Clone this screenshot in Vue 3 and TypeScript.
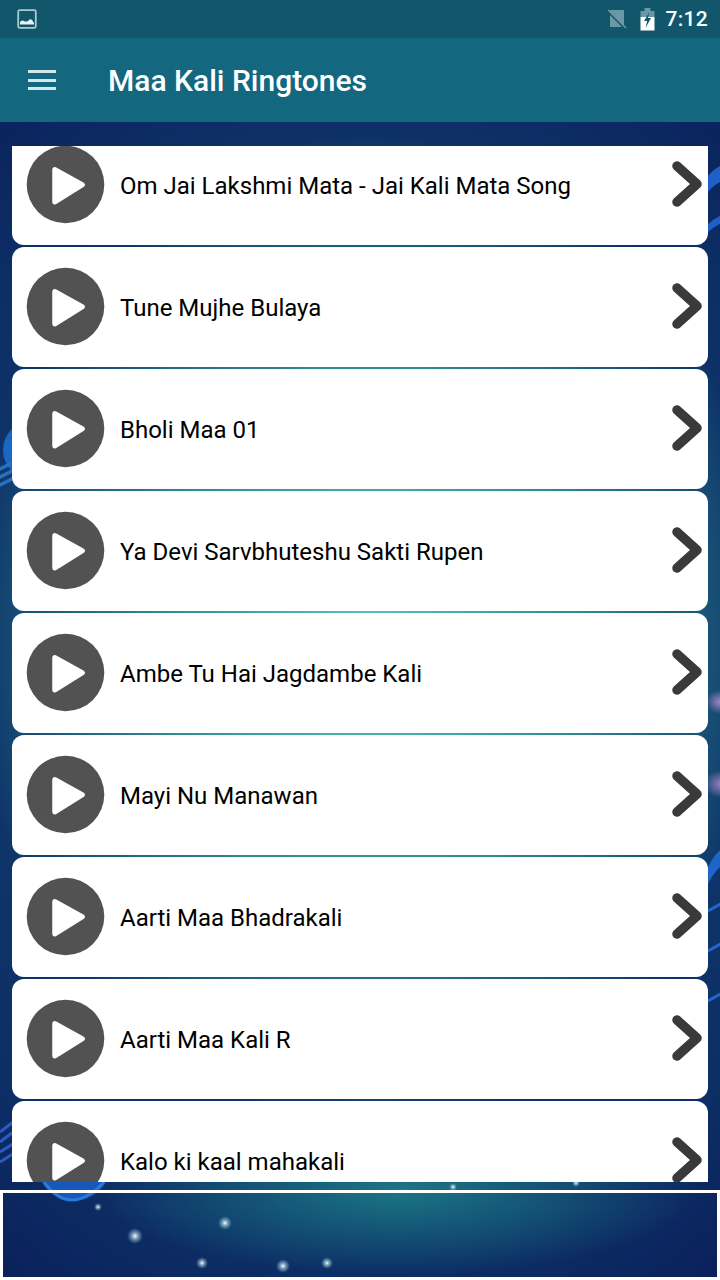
<script setup lang="ts">
const songs: string[] = [
  'Om Jai Lakshmi Mata - Jai Kali Mata Song',
  'Tune Mujhe Bulaya',
  'Bholi Maa 01',
  'Ya Devi Sarvbhuteshu Sakti Rupen',
  'Ambe Tu Hai Jagdambe Kali',
  'Mayi Nu Manawan',
  'Aarti Maa Bhadrakali',
  'Aarti Maa Kali R',
  'Kalo ki kaal mahakali',
]
const stars: { x: number; y: number; r: number }[] = [
  { x: 135, y: 1114, r: 8 },
  { x: 225, y: 1101, r: 7 },
  { x: 202, y: 1141, r: 6 },
  { x: 283, y: 1144, r: 7 },
  { x: 327, y: 1141, r: 6 },
  { x: 98, y: 1085, r: 4 },
  { x: 453, y: 1065, r: 4 },
  { x: 576, y: 1061, r: 4 },
]
</script>

<template>
  <div class="screen">
    <header class="status">
      <svg class="notif" viewBox="0 0 20 20" width="20" height="20">
        <rect x="1.2" y="1.2" width="17.6" height="17.6" rx="1.5" fill="none" stroke="#a9ccd3" stroke-width="1.8" />
        <path d="M3 15.5 L3 13 Q5 10.5 7 12 Q9 13 11 12 Q13 9 15 11 L17 14 L17 15.5 Z" fill="#e8f2f4" />
      </svg>
      <div class="status-right">
        <svg class="sim" viewBox="0 0 20 20" width="20" height="20">
          <path d="M3 1 H17 V18 H3 Z" fill="#6a98a4" />
          <path d="M1 1 L19 19" stroke="#6a98a4" stroke-width="1.6" />
          <path d="M1 3 L17 19" stroke="#11566a" stroke-width="1.4" />
        </svg>
        <svg class="batt" viewBox="0 0 15 23" width="15" height="23">
          <rect x="4.5" y="0" width="6" height="3" fill="#6a98a4" />
          <rect x="0.5" y="3" width="14" height="6" fill="#6a98a4" />
          <rect x="0.5" y="9" width="14" height="13.5" fill="#ffffff" />
          <path d="M9.5 4 L4 13 H7.2 L5.5 20 L11 10 H7.8 Z" fill="#11566a" />
        </svg>
        <span class="time">7:12</span>
      </div>
    </header>

    <div class="toolbar">
      <div class="burger"><i></i><i></i><i></i></div>
      <h1 class="title">Maa Kali Ringtones</h1>
    </div>

    <main class="stage">
      <svg class="decor" viewBox="0 0 720 1158" width="720" height="1158">
        <defs>
          <radialGradient id="glow">
            <stop offset="0" stop-color="#ffffff" />
            <stop offset="0.3" stop-color="#cfe6ee" stop-opacity="0.7" />
            <stop offset="1" stop-color="#8fc6d8" stop-opacity="0" />
          </radialGradient>
          <radialGradient id="purple">
            <stop offset="0" stop-color="#b58ccf" stop-opacity="0.9" />
            <stop offset="1" stop-color="#b58ccf" stop-opacity="0" />
          </radialGradient>
        </defs>
        <circle cx="32" cy="328" r="29" fill="#1a67c4" />
        <g fill="none" stroke="#2a6fc4" stroke-width="3.5">
          <path d="M-6 350 L14 340" />
          <path d="M-6 358 L14 348" />
          <path d="M-6 366 L14 356" />
        </g>
        <g fill="none" stroke="#2a5cc0" stroke-width="3">
          <path d="M0 1040 L16 1030" />
          <path d="M0 1030 L16 1020" />
          <path d="M0 1020 L16 1008" />
          <path d="M0 1010 L16 998" />
        </g>
        <path d="M42 1060 A36 34 0 0 0 106 1060 Z" fill="#1659bb" />
        <path d="M44 1060 Q70 1096 104 1060" fill="none" stroke="#2a78d8" stroke-width="3" />
        <path d="M706 56 Q714 46 724 42 V58 Q714 62 706 72 Z" fill="#1f5fc8" />
        <path d="M706 104 Q714 96 724 92 V100 Q714 104 706 112 Z" fill="#1f5fc8" />
        <path d="M706 750 Q714 730 724 726 V742 Q714 748 706 766 Z" fill="#1c66c8" />
        <g fill="none" stroke="#2466cc" stroke-width="3">
          <path d="M706 790 L724 780" />
          <path d="M706 830 L724 820" />
          <path d="M706 880 L724 870" />
        </g>
        <ellipse cx="720" cy="580" rx="14" ry="12" fill="url(#purple)" />
        <ellipse cx="722" cy="662" rx="18" ry="14" fill="url(#purple)" />
        <circle v-for="(s, i) in stars" :key="i" :cx="s.x" :cy="s.y" :r="s.r" fill="url(#glow)" />
      </svg>

      <section class="list">
        <article v-for="song in songs" :key="song" class="card">
          <svg class="play" viewBox="0 0 78 78" width="78" height="78">
            <circle cx="38.5" cy="38.5" r="38.8" fill="#525252" />
            <path d="M28.5 22 L56.5 37.5 Q58 38.5 56.5 40 L28.5 57.5 Q26 58.5 26 55.5 V24 Q26 21 28.5 22 Z" fill="#ffffff" stroke="#ffffff" stroke-width="1.5" stroke-linejoin="round" />
          </svg>
          <span class="name">{{ song }}</span>
          <svg class="chev" viewBox="0 0 36 50" width="36" height="50">
            <path d="M8 6 L28 24 L8 42" fill="none" stroke="#3a3a3a" stroke-width="9.5" stroke-linecap="round" stroke-linejoin="round" />
          </svg>
        </article>
      </section>

      <aside class="ad"></aside>
    </main>
  </div>
</template>

<style>
html,
body {
  margin: 0;
  background: #ffffff;
}
</style>

<style scoped>
.screen {
  width: 720px;
  height: 1280px;
  display: flex;
  flex-direction: column;
  overflow: hidden;
  font-family: Roboto, "Liberation Sans", sans-serif;
}
.status {
  height: 38px;
  flex: none;
  box-sizing: border-box;
  padding: 0 12px 0 17px;
  background: #11566a;
  display: flex;
  align-items: center;
  justify-content: space-between;
}
.notif {
  display: block;
}
.status-right {
  display: flex;
  align-items: center;
  gap: 10px;
}
.sim {
  margin-right: 3px;
}
.time {
  color: #ffffff;
  font-size: 21px;
  font-weight: 500;
  letter-spacing: 0.3px;
}
.toolbar {
  height: 84px;
  flex: none;
  background: #13677f;
  display: flex;
  align-items: center;
  box-sizing: border-box;
  padding: 0 0 0 28px;
}
.burger {
  width: 28px;
  height: 20px;
  display: flex;
  flex-direction: column;
  justify-content: space-between;
  margin-right: 52px;
}
.burger i {
  display: block;
  height: 3px;
  background: #d4e8ec;
}
.title {
  margin: 0;
  color: #ffffff;
  font-size: 30px;
  font-weight: 500;
}
.stage {
  position: relative;
  flex: 1;
  min-height: 0;
  box-sizing: border-box;
  padding-top: 24px;
  display: flex;
  flex-direction: column;
  background:
    radial-gradient(ellipse 300px 85px at 400px 1068px, rgba(30, 135, 140, 0.8), rgba(30, 135, 140, 0) 100%),
    radial-gradient(ellipse 400px 500px at 370px 510px, rgba(90, 195, 185, 1) 0%, rgba(50, 150, 150, 0.85) 55%, rgba(20, 80, 115, 0) 100%),
    radial-gradient(ellipse 640px 760px at 360px 560px, #124874 0%, #0d2f66 75%, #0a1e5a 100%);
}
.decor {
  position: absolute;
  left: 0;
  top: 0;
  display: block;
}
.list {
  position: relative;
  height: 1036px;
  flex: none;
  overflow: hidden;
  padding: 0 12px;
  display: flex;
  flex-direction: column;
  gap: 2px;
}
.card {
  height: 120px;
  flex: none;
  box-sizing: border-box;
  background: #ffffff;
  border-radius: 12px;
  display: flex;
  align-items: center;
  padding: 0 3px 0 15px;
}
.card:first-child {
  margin-top: -21px;
}
.play {
  flex: none;
  display: block;
  overflow: visible;
}
.name {
  flex: 1;
  margin-left: 15px;
  padding-top: 1px;
  color: #000000;
  font-size: 24px;
  white-space: nowrap;
}
.chev {
  flex: none;
  display: block;
}
.ad {
  position: relative;
  flex: 1;
  margin-top: 8px;
  border: 3px solid #ffffff;
}
</style>
